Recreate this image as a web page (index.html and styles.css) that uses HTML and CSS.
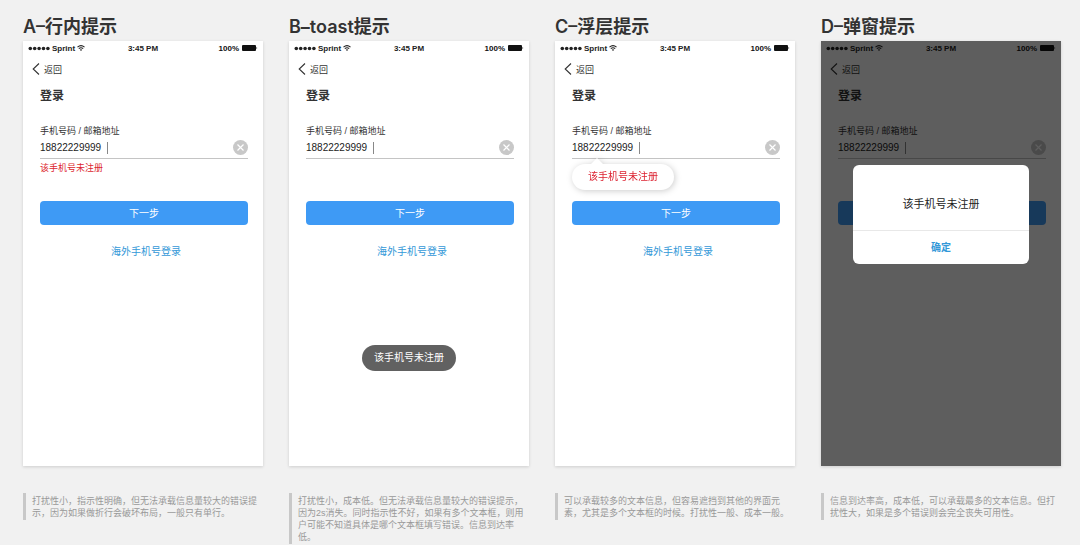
FILE: index.html
```
<!DOCTYPE html>
<html lang="zh-CN">
  <head>
    <meta charset="UTF-8">
    <title>登录错误提示</title>
    <link rel="stylesheet" href="styles.css">
  </head>
  <body>
    <!-- 公用图标 -->
    <svg class="icons" width="0" height="0">
      <symbol id="dots" viewBox="0 0 22 5">
        <circle cx="2.3" cy="2.5" r="1.8"/>
        <circle cx="6.7" cy="2.5" r="1.8"/>
        <circle cx="11.1" cy="2.5" r="1.8"/>
        <circle cx="15.5" cy="2.5" r="1.8"/>
        <circle cx="19.9" cy="2.5" r="1.8"/>
      </symbol>
      <symbol id="wifi" viewBox="0 0 8 6">
        <path d="M0.5 2.2Q4 -0.9 7.5 2.2M1.8 3.7Q4 1.8 6.2 3.7" fill="none" stroke="currentColor" stroke-width="1.1"/>
        <path d="M2.8 4.7Q4 3.7 5.2 4.7L4 6Z"/>
      </symbol>
      <symbol id="battery" viewBox="0 0 16 6">
        <rect x="0" y="0" width="14" height="6" rx="1"/>
        <path d="M14.5 1.8Q16 3 14.5 4.2Z"/>
      </symbol>
      <symbol id="back" viewBox="0 0 8 12">
        <path d="M7 0.5L1.2 6L7 11.5" fill="none" stroke="currentColor" stroke-width="1.1"/>
      </symbol>
      <symbol id="clear" viewBox="0 0 15 15">
        <circle cx="7.5" cy="7.5" r="7.5" fill="#c8c8c8"/>
        <path d="M4.5 4.5L10.5 10.5M10.5 4.5L4.5 10.5" fill="none" stroke="#fff" stroke-width="1.2"/>
      </symbol>
    </svg>

    <div class="board">
      <!-- A -->
      <section class="case">
        <h1>A–行内提示</h1>
        <div class="phone">
          <div class="status">
            <span class="carrier"><svg class="dots"><use href="#dots"/></svg>Sprint<svg class="wifi"><use href="#wifi"/></svg></span>
            <span>3:45 PM</span>
            <span class="power">100%<svg class="battery"><use href="#battery"/></svg></span>
          </div>
          <a class="back" href="#"><svg><use href="#back"/></svg>返回</a>
          <form class="login">
            <h2>登录</h2>
            <label for="phoneA">手机号码 / 邮箱地址</label>
            <div class="field">
              <input type="text" id="phoneA" value="18822229999">
              <i class="caret"></i>
              <button type="button" class="clear" aria-label="清除"><svg><use href="#clear"/></svg></button>
            </div>
            <div class="message"><p class="error">该手机号未注册</p></div>
            <button type="button" class="next">下一步</button>
            <a class="overseas" href="#">海外手机号登录</a>
          </form>
        </div>
        <p class="note">打扰性小，指示性明确，但无法承载信息量较大的错误提示，因为如果做折行会破坏布局，一般只有单行。</p>
      </section>

      <!-- B -->
      <section class="case">
        <h1>B–toast提示</h1>
        <div class="phone">
          <div class="status">
            <span class="carrier"><svg class="dots"><use href="#dots"/></svg>Sprint<svg class="wifi"><use href="#wifi"/></svg></span>
            <span>3:45 PM</span>
            <span class="power">100%<svg class="battery"><use href="#battery"/></svg></span>
          </div>
          <a class="back" href="#"><svg><use href="#back"/></svg>返回</a>
          <form class="login">
            <h2>登录</h2>
            <label for="phoneB">手机号码 / 邮箱地址</label>
            <div class="field">
              <input type="text" id="phoneB" value="18822229999">
              <i class="caret"></i>
              <button type="button" class="clear" aria-label="清除"><svg><use href="#clear"/></svg></button>
            </div>
            <div class="message"></div>
            <button type="button" class="next">下一步</button>
            <a class="overseas" href="#">海外手机号登录</a>
          </form>
          <div class="toast">该手机号未注册</div>
        </div>
        <p class="note">打扰性小，成本低。但无法承载信息量较大的错误提示，因为2s消失。同时指示性不好，如果有多个文本框，则用户可能不知道具体是哪个文本框填写错误。信息到达率低。</p>
      </section>

      <!-- C -->
      <section class="case">
        <h1>C–浮层提示</h1>
        <div class="phone">
          <div class="status">
            <span class="carrier"><svg class="dots"><use href="#dots"/></svg>Sprint<svg class="wifi"><use href="#wifi"/></svg></span>
            <span>3:45 PM</span>
            <span class="power">100%<svg class="battery"><use href="#battery"/></svg></span>
          </div>
          <a class="back" href="#"><svg><use href="#back"/></svg>返回</a>
          <form class="login">
            <h2>登录</h2>
            <label for="phoneC">手机号码 / 邮箱地址</label>
            <div class="field">
              <input type="text" id="phoneC" value="18822229999">
              <i class="caret"></i>
              <button type="button" class="clear" aria-label="清除"><svg><use href="#clear"/></svg></button>
            </div>
            <div class="message"><div class="popover">该手机号未注册</div></div>
            <button type="button" class="next">下一步</button>
            <a class="overseas" href="#">海外手机号登录</a>
          </form>
        </div>
        <p class="note">可以承载较多的文本信息，但容易遮挡到其他的界面元素，尤其是多个文本框的时候。打扰性一般、成本一般。</p>
      </section>

      <!-- D -->
      <section class="case">
        <h1>D–弹窗提示</h1>
        <div class="phone">
          <div class="status">
            <span class="carrier"><svg class="dots"><use href="#dots"/></svg>Sprint<svg class="wifi"><use href="#wifi"/></svg></span>
            <span>3:45 PM</span>
            <span class="power">100%<svg class="battery"><use href="#battery"/></svg></span>
          </div>
          <a class="back" href="#"><svg><use href="#back"/></svg>返回</a>
          <form class="login">
            <h2>登录</h2>
            <label for="phoneD">手机号码 / 邮箱地址</label>
            <div class="field">
              <input type="text" id="phoneD" value="18822229999">
              <i class="caret"></i>
              <button type="button" class="clear" aria-label="清除"><svg><use href="#clear"/></svg></button>
            </div>
            <div class="message"></div>
            <button type="button" class="next">下一步</button>
          </form>
          <div class="mask">
            <div class="dialog" role="dialog">
              <p>该手机号未注册</p>
              <button type="button">确定</button>
            </div>
          </div>
        </div>
        <p class="note">信息到达率高，成本低，可以承载最多的文本信息。但打扰性大，如果是多个错误则会完全丧失可用性。</p>
      </section>
    </div>
  </body>
</html>
```
FILE: styles.css
```
* {
  box-sizing: border-box;
}
body {
  margin: 0;
  background: #f1f1f1;
  color: #333;
  font-family: "Liberation Sans", "Noto Sans CJK SC", sans-serif;
  font-size: 9px;
}
h1, h2, p {
  margin: 0;
}
a {
  text-decoration: none;
}
button, input {
  margin: 0;
  padding: 0;
  border: 0;
  background: none;
  font-family: inherit;
}
svg {
  display: block;
  fill: currentColor;
}
.icons {
  position: absolute;
}
.board {
  display: grid;
  grid-template-columns: repeat(4, 1fr);
  gap: 26px;
  padding: 15px 19px 0 23px;
}
h1 {
  margin-bottom: 2px;
  font-family: Inter, "Noto Sans CJK SC", sans-serif;
  font-size: 18px;
  font-weight: 600;
  line-height: 24px;
}
.phone {
  position: relative;
  min-height: 425px;
  background: #fff;
  box-shadow: 0 1px 3px rgba(0, 0, 0, 0.15);
}

/* 状态栏 */
.status {
  display: grid;
  grid-template-columns: 1fr auto 1fr;
  align-items: center;
  height: 14px;
  padding: 0 5px;
  color: #222;
  font-size: 8px;
  font-weight: bold;
}
.carrier, .power {
  display: flex;
  align-items: center;
  gap: 2px;
}
.power {
  justify-content: flex-end;
  gap: 3px;
  color: #111;
}
.dots {
  width: 22px;
  height: 5px;
}
.wifi {
  width: 8px;
  height: 6px;
}
.battery {
  width: 16px;
  height: 6px;
}
.back {
  display: flex;
  align-items: center;
  gap: 4px;
  height: 28px;
  padding-left: 9px;
  color: #333;
}
.back svg {
  width: 8px;
  height: 12px;
}

/* 表单 */
.login {
  padding: 4px 15px 0 17px;
}
h2 {
  margin-bottom: 20px;
  font-size: 12px;
  line-height: 18px;
}
label {
  display: block;
  line-height: 12px;
}
.field {
  position: relative;
  display: flex;
  align-items: center;
  height: 22px;
  border-bottom: 1px solid #c4c4c4;
}
.field input {
  flex: 1;
  min-width: 0;
  color: #222;
  font-size: 10px;
  line-height: 20px;
  outline: none;
}
.caret {
  position: absolute;
  top: 5px;
  left: 67px;
  width: 1px;
  height: 12px;
  background: #888;
}
.clear svg {
  width: 15px;
  height: 15px;
}
.message {
  position: relative;
  height: 42px;
  padding-top: 3px;
}
.error {
  color: #dc1f2e;
  line-height: 12px;
}
.next {
  display: block;
  width: 100%;
  height: 24px;
  padding-bottom: 2px;
  border-radius: 4px;
  background: #3e9af5;
  color: #fff;
  font-size: 10px;
}
.overseas {
  display: block;
  margin: 20px 0 0 4px;
  color: #3398d8;
  font-size: 10px;
  line-height: 14px;
  text-align: center;
}

/* 三种浮在页面上的提示 */
.toast {
  position: absolute;
  top: 304px;
  left: 50%;
  padding: 0 12px;
  border-radius: 13px;
  background: #616161;
  color: #fff;
  font-size: 10px;
  line-height: 26px;
  white-space: nowrap;
  transform: translateX(-50%);
}
.popover {
  position: absolute;
  top: 5px;
  left: 0;
  padding: 0 16px;
  border-radius: 13px;
  background: #fff;
  color: #dc1f2e;
  font-size: 10px;
  line-height: 26px;
  filter: drop-shadow(1px 1px 3px rgba(0, 0, 0, 0.2));
}
.popover::before {
  content: "";
  position: absolute;
  top: -6px;
  left: 18px;
  border: solid transparent;
  border-width: 0 7px 7px;
  border-bottom-color: #fff;
}
.mask {
  position: absolute;
  inset: 0;
  display: flex;
  align-items: flex-start;
  justify-content: center;
  padding-top: 124px;
  background: rgba(0, 0, 0, 0.63);
}
.dialog {
  width: 73%;
  border-radius: 6px;
  background: #fff;
  text-align: center;
}
.dialog p {
  padding: 29px 0 16px;
  border-bottom: 1px solid #e8e8e8;
  color: #222;
  font-size: 11px;
  line-height: 20px;
}
.dialog button {
  width: 100%;
  height: 33px;
  padding-bottom: 3px;
  color: #3398d8;
  font-size: 10px;
  font-weight: bold;
}

.note {
  margin-top: 27px;
  padding: 2px 0 1px 6px;
  border-left: 3px solid #c8c8c8;
  color: #999;
  line-height: 12px;
}
```
